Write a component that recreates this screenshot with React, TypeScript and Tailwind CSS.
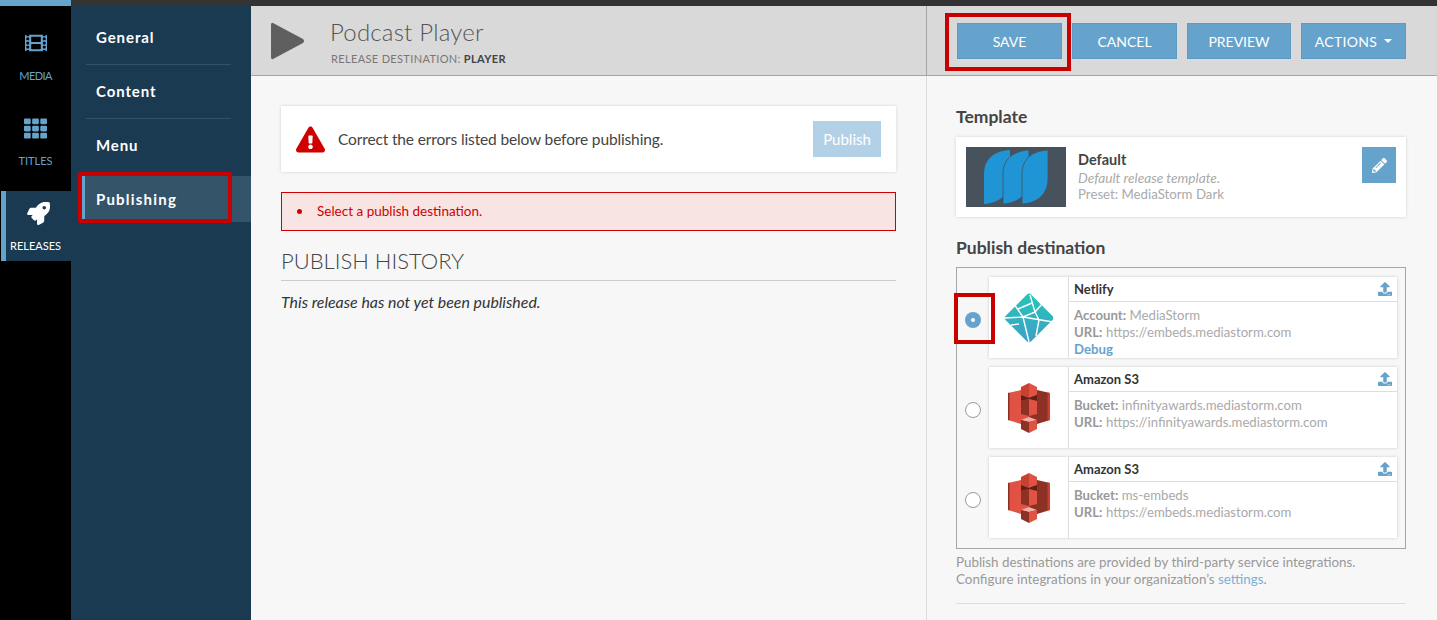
import { FaFilm, FaTh, FaRocket, FaPencilAlt, FaUpload, FaExclamationTriangle } from "react-icons/fa";

const F = "[font-family:Lato,'Noto_Sans',sans-serif]";

function Netlify() {
  return (
    <svg width="50" height="50" viewBox="0 0 50 50">
      <defs>
        <linearGradient id="nl" x1="0" y1="0" x2="0" y2="1">
          <stop offset="0" stopColor="#25c7b7" />
          <stop offset="1" stopColor="#3f9ec6" />
        </linearGradient>
      </defs>
      <path d="M25 0.5 Q26 0.5 27 1.5 L48.5 23 Q50 25 48.5 27 L27 48.5 Q25 50 23 48.5 L1.5 27 Q0 25 1.5 23 L23 1.5 Q24 0.5 25 0.5 Z" fill="url(#nl)" />
      <path d="M0.5 25 L19 24 L31 19 L26 2 M31 19 L38 11 M19 24 L10 11 M19 24 L49 29 M19 24 L25 49 M35 27 L32 43 M7 32 L15 31 M31 19 L35 27 M14 16 L28 10" stroke="#fff" strokeWidth="1.4" fill="none" />
    </svg>
  );
}

function S3() {
  return (
    <svg width="42" height="50" viewBox="0 0 42 50">
      <polygon points="0,10 13,7 21,8 21,40 13,41 0,37" fill="#e05243" />
      <polygon points="0,10 1.5,9.6 1.5,37.4 0,37" fill="#8c3123" />
      <polygon points="42,10 29,7 21,8 21,40 29,41 42,37" fill="#8c3123" />
      <polygon points="42,10 39.5,9.5 39.5,37.5 42,37" fill="#c8402f" />
      <polygon points="13,4 21,0 21,15 13,12" fill="#c8402f" />
      <polygon points="29,4 21,0 21,15 29,12" fill="#e05243" />
      <polygon points="13,12 21,15 29,12 29,18 21,16 13,18" fill="#5e1f18" />
      <polygon points="13,18 21,16 21,33 13,31" fill="#8c3123" />
      <polygon points="29,18 21,16 21,33 29,31" fill="#e05243" />
      <polygon points="13,37 21,34 29,37 21,39" fill="#f2b0a9" />
      <polygon points="13,37 21,39 21,50 13,46" fill="#8c3123" />
      <polygon points="29,37 21,39 21,50 29,46" fill="#e05243" />
    </svg>
  );
}

function Rail({ icon, label, active, tight }: { icon: React.ReactNode; label: string; active?: boolean; tight?: boolean }) {
  return (
    <div className={`flex flex-col items-center pt-[11px] text-[11px] leading-[15px] shrink-0 ${active ? "h-[70px] ml-[1px] pr-[1px] bg-[#1a3a52] text-white border-l-[5px] border-[#66a3cc]" : "h-[85px] text-[#66a3cc]"}`}>
      <div className="h-[22px] flex items-center justify-center">{icon}</div>
      <span className={`${active ? "mt-[14px] -ml-[5px]" : "mt-[14px]"} ${tight ? "tracking-[-0.6px]" : ""}`}>{label}</span>
    </div>
  );
}

function Dest({ title, l1, v1, l2, v2, logo, debug, checked }: { title: string; l1: string; v1: string; l2: string; v2: string; logo: React.ReactNode; debug?: boolean; checked?: boolean }) {
  return (
    <div className="flex items-center">
      <div className="w-[32px] flex justify-center pt-[4px]">
        {checked ? (
          <div className="w-4 h-4 rounded-full bg-[#66a3cc] flex items-center justify-center"><div className="w-1 h-1 rounded-full bg-white" /></div>
        ) : (
          <div className="w-4 h-4 rounded-full border border-[#999] bg-white" />
        )}
      </div>
      <div className="flex-1 h-[81px] bg-white shadow-[0_0_3px_rgba(0,0,0,0.18)] flex">
        <div className="w-[80px] shrink-0 border-r border-[#ddd] flex items-center justify-center">{logo}</div>
        <div className="flex-1 min-w-0">
          <div className="h-[25px] border-b border-[#ddd] flex items-center justify-between pl-[5px] pr-[5px] text-[13px] font-bold text-[#333]">
            <span className="pt-[1px]">{title}</span>
            <FaUpload className="text-[#66a3cc] text-[14px]" />
          </div>
          <div className="pl-[5px] pt-[5px] text-[13.2px] leading-[17px] text-[#aaa]">
            <div><b className="text-[#999]">{l1}</b> {v1}</div>
            <div><b className="text-[#999]">{l2}</b> {v2}</div>
            {debug && <div className="font-bold text-[#66a3cc]">Debug</div>}
          </div>
        </div>
      </div>
    </div>
  );
}

function Btn({ children, w }: { children: React.ReactNode; w: string }) {
  return <div className={`${w} h-9 bg-[#66a3cc] border border-[#5c9bc6] text-white text-[14px] flex items-center justify-center`}>{children}</div>;
}

export default function App() {
  return (
    <div className={`relative w-[1437px] h-[620px] overflow-hidden flex bg-[#f7f7f7] ${F}`}>
      <div className="w-[71px] shrink-0 bg-black flex flex-col">
        <div className="h-[6px] bg-[#66a3cc] shrink-0" />
        <div className="h-[15px] shrink-0" />
        <Rail icon={<FaFilm className="text-[22px]" />} label="MEDIA" tight />
        <Rail icon={<FaTh className="text-[23px]" />} label="TITLES" />
        <Rail icon={<FaRocket className="text-[23px]" />} label="RELEASES" active />
      </div>
      <div className="flex-1 flex flex-col min-w-0">
        <div className="h-[6px] bg-[#333] shrink-0" />
        <div className="flex-1 flex min-h-0">
          <div className="w-[180px] shrink-0 bg-[#1a3a52] text-white font-bold text-[15px] tracking-[0.9px] flex flex-col pt-[5px]">
            <div className="h-[54px] ml-[15px] mr-[20px] flex items-center border-b border-[#33516a] pl-[10px]">General</div>
            <div className="h-[54px] ml-[15px] mr-[20px] flex items-center border-b border-[#33516a] pl-[10px]">Content</div>
            <div className="h-[53px] ml-[15px] mr-[20px] flex items-center pl-[10px]">Menu</div>
            <div className="h-[46px] mt-[4px] ml-[10px] flex items-center bg-[#34546a] border-l-4 border-[#66a3cc] pl-[11px] tracking-[1.2px]">Publishing</div>
          </div>
          <div className="flex-1 flex flex-col min-w-0">
            <div className="h-[70px] shrink-0 bg-[#d9d9d9] border-b border-[#a5a5a5] flex">
              <div className="w-[675px] flex items-center pl-[20px]">
                <svg width="34" height="40" viewBox="0 0 34 40" className="mr-[25px]"><path d="M2 2 Q0 1 0 4 L0 36 Q0 39 2 38 L32 22 Q34 20 32 18 Z" fill="#5f5f5f" /></svg>
                <div className="pt-[2px]">
                  <div className="text-[24px] font-light tracking-[0.2px] leading-[28px] text-[#555]">Podcast Player</div>
                  <div className="text-[11px] leading-[14px] mt-[6px] tracking-[0.35px] text-[#777] ml-[1px]">RELEASE DESTINATION: <b className="text-[#444]">PLAYER</b></div>
                </div>
              </div>
              <div className="flex-1 border-l border-[#a5a5a5] flex items-start pt-[17px] pl-[30px] gap-[10px]">
                <Btn w="w-[105px]">SAVE</Btn>
                <Btn w="w-[105px]">CANCEL</Btn>
                <Btn w="w-[104px]">PREVIEW</Btn>
                <Btn w="w-[105px]"><span className="tracking-[0.3px]">ACTIONS</span><span className="ml-[7px] border-x-[4px] border-t-[4px] border-x-transparent border-t-white" /></Btn>
              </div>
            </div>
            <div className="flex-1 flex min-h-0">
              <div className="w-[675px] shrink-0 px-[30px] pt-[30px]">
                <div className="h-[66px] bg-white shadow-[0_0_3px_rgba(0,0,0,0.15)] flex items-center pl-[15px] pr-[15px] gap-[13px] text-[15.5px] tracking-[-0.14px] text-[#444]">
                  <FaExclamationTriangle className="text-[#d00000] text-[29px]" />
                  <span className="flex-1 pt-[2px]">Correct the errors listed below before publishing.</span>
                  <div className="w-[68px] h-9 bg-[#b3d1e6] text-white text-[15px] tracking-normal flex items-center justify-center">Publish</div>
                </div>
                <div className="mt-[20px] h-[39px] bg-[#f9e4e4] border border-[#d00000] flex items-center pl-[15px] text-[#d00000] text-[13.5px]">
                  <span className="w-[5px] h-[5px] rounded-full bg-[#d00000] mr-[15px]" />
                  Select a publish destination.
                </div>
                <div className="mt-[16px] h-[34px] border-b border-[#ccc] text-[22px] font-light text-[#444] leading-[28px]">PUBLISH HISTORY</div>
                <div className="mt-[9px] italic text-[15.9px] text-[#333]">This release has not yet been published.</div>
              </div>
              <div className="flex-1 border-l border-[#ddd] pl-[29px] pr-[31px] pt-[30px]">
                <div className="text-[17.5px] font-bold text-[#444] leading-[22px]">Template</div>
                <div className="mt-[9px] h-[80px] bg-white shadow-[0_0_3px_rgba(0,0,0,0.15)] p-[10px] flex">
                  <div className="w-[100px] h-[60px] bg-[#47525c] flex items-center justify-center shrink-0">
                    <svg width="64" height="54" viewBox="0 0 64 54">
                      <path d="M0 54 V24 C0 9 10 1 26 0 V28 C26 44 16 53 0 54 Z" fill="#1f95d6" />
                      <path d="M19 54 V24 C19 9 29 1 45 0 V28 C45 44 35 53 19 54 Z" fill="#1f95d6" stroke="#47525c" strokeWidth="0.8" />
                      <path d="M38 54 V24 C38 9 48 1 64 0 V28 C64 44 54 53 38 54 Z" fill="#1f95d6" stroke="#47525c" strokeWidth="0.8" />
                    </svg>
                  </div>
                  <div className="ml-[12px] flex-1 text-[13.25px] leading-[17px] text-[#aaa] pt-[3px]">
                    <div className="font-bold text-[14.5px] text-[#444] leading-[19px]">Default</div>
                    <div className="italic text-[13.7px]">Default release template.</div>
                    <div>Preset: MediaStorm Dark</div>
                  </div>
                  <div className="w-[34px] h-9 bg-[#66a3cc] flex items-center justify-center text-white text-[15px]"><FaPencilAlt /></div>
                </div>
                <div className="mt-[20px] text-[17.5px] font-bold text-[#444] leading-[22px]">Publish destination</div>
                <div className="mt-[8px] h-[282px] border border-[#a5a5a5] pt-[9px] pr-[8px] flex flex-col gap-[9px]">
                  <Dest checked debug title="Netlify" l1="Account:" v1="MediaStorm" l2="URL:" v2="https://embeds.mediastorm.com" logo={<Netlify />} />
                  <Dest title="Amazon S3" l1="Bucket:" v1="infinityawards.mediastorm.com" l2="URL:" v2="https://infinityawards.mediastorm.com" logo={<S3 />} />
                  <Dest title="Amazon S3" l1="Bucket:" v1="ms-embeds" l2="URL:" v2="https://embeds.mediastorm.com" logo={<S3 />} />
                </div>
                <div className="mt-[5px] text-[13.4px] leading-[17px] text-[#999]">
                  Publish destinations are provided by third-party service integrations.<br />
                  Configure integrations in your organization’s <span className="text-[#7ab0d4]">settings</span>.
                </div>
                <div className="mt-[15px] border-t border-[#ddd]" />
              </div>
            </div>
          </div>
        </div>
      </div>
      <div className="absolute left-[945px] top-[13px] w-[126px] h-[58px] border-[4px] border-[#c80000]" />
      <div className="absolute left-[78px] top-[172px] w-[154px] h-[51px] border-[4px] border-[#c80000] rounded-[2px]" />
      <div className="absolute left-[954px] top-[293px] w-[41px] h-[51px] border-[4px] border-[#c80000]" />
    </div>
  );
}
